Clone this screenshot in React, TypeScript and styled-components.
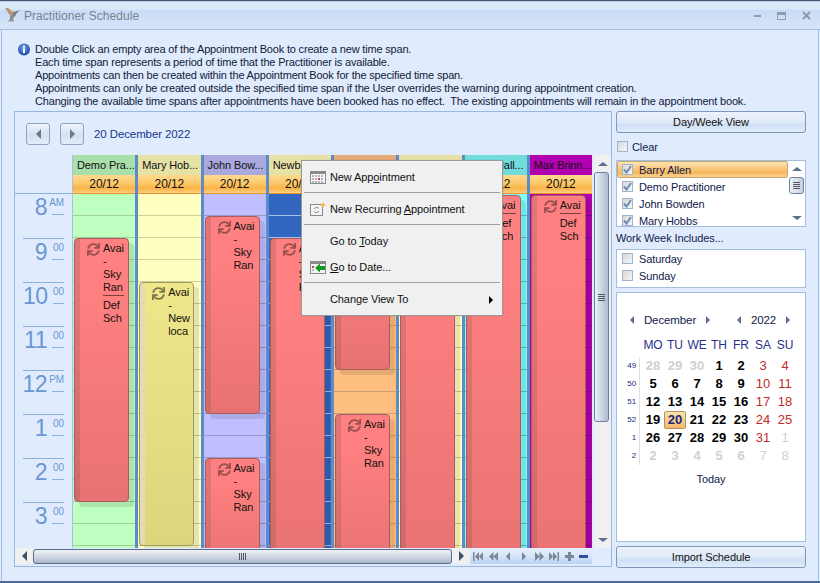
import React from 'react';
import styled, { createGlobalStyle } from 'styled-components';
import { FaSync } from 'react-icons/fa';

const GlobalStyle = createGlobalStyle`
  html, body {
    margin: 0;
    padding: 0;
    background: #e0ecfd;
  }
  body {
    font-family: "Liberation Sans", Arial, sans-serif;
    font-size: 11px;
    letter-spacing: -0.1px;
    color: #111;
  }
  * { box-sizing: border-box; }
`;

type Appt = { top: number; height: number; yellow?: boolean; lines: string[]; note?: string[] };
type Col = { name: string; head: string; body: string; line: string; appts: Appt[] };

const skyRan = ['Avai', '-', 'Sky', 'Ran'];
const defSch = ['Def', 'Sch'];

const columns: Col[] = [
  {
    name: 'Demo Pra...', head: '#a9dfa9', body: '#bfffbf', line: '#a3cf98',
    appts: [{ top: 44, height: 264, lines: skyRan, note: defSch }],
  },
  {
    name: 'Mary Hob...', head: '#e6e2a6', body: '#ffffbf', line: '#cfcf98',
    appts: [{ top: 88, height: 264, yellow: true, lines: ['Avai', '-', 'New', 'loca'] }],
  },
  {
    name: 'John Bow...', head: '#a9a9df', body: '#bfbfff', line: '#9898c8',
    appts: [
      { top: 22, height: 198, lines: skyRan },
      { top: 264, height: 110, lines: skyRan },
    ],
  },
  {
    name: 'Newbie P...', head: '#e6e2a6', body: '#3366c0', line: '#a8c0e8',
    appts: [{ top: 44, height: 330, lines: skyRan }],
  },
  {
    name: 'Sam Ah...', head: '#e5a878', body: '#ffbf80', line: '#cfa070',
    appts: [
      { top: 1, height: 175, lines: [] },
      { top: 220, height: 154, lines: skyRan },
    ],
  },
  {
    name: 'Mary B...', head: '#e6e2a6', body: '#ffffbf', line: '#cfcf98',
    appts: [{ top: 1, height: 374, lines: [] }],
  },
  {
    name: 'Colin Hall...', head: '#70dcdc', body: '#80ffff', line: '#60c0c0',
    appts: [{ top: 1, height: 374, lines: ['Avai'], note: defSch }],
  },
  {
    name: 'Max Brinn...', head: '#b000b0', body: '#b000b0', line: '#8a008a',
    appts: [{ top: 1, height: 374, lines: ['Avai'], note: defSch }],
  },
];

const hours = [
  { h: '8', s: 'AM' },
  { h: '9', s: '00' },
  { h: '10', s: '00' },
  { h: '11', s: '00' },
  { h: '12', s: 'PM' },
  { h: '1', s: '00' },
  { h: '2', s: '00' },
  { h: '3', s: '00' },
];

const weeks: { wk: string; days: [string, 'n' | 'o' | 'w' | 'ow' | 's'][] }[] = [
  { wk: '49', days: [['28', 'o'], ['29', 'o'], ['30', 'o'], ['1', 'n'], ['2', 'n'], ['3', 'w'], ['4', 'w']] },
  { wk: '50', days: [['5', 'n'], ['6', 'n'], ['7', 'n'], ['8', 'n'], ['9', 'n'], ['10', 'w'], ['11', 'w']] },
  { wk: '51', days: [['12', 'n'], ['13', 'n'], ['14', 'n'], ['15', 'n'], ['16', 'n'], ['17', 'w'], ['18', 'w']] },
  { wk: '52', days: [['19', 'n'], ['20', 's'], ['21', 'n'], ['22', 'n'], ['23', 'n'], ['24', 'w'], ['25', 'w']] },
  { wk: '1', days: [['26', 'n'], ['27', 'n'], ['28', 'n'], ['29', 'n'], ['30', 'n'], ['31', 'w'], ['1', 'ow']] },
  { wk: '2', days: [['2', 'o'], ['3', 'o'], ['4', 'o'], ['5', 'o'], ['6', 'o'], ['7', 'ow'], ['8', 'ow']] },
];

const Arrow = ({ dir, color = '#5c6f8c', size = 4 }: { dir: 'l' | 'r' | 'u' | 'd'; color?: string; size?: number }) => (
  <ArrowShape $dir={dir} $color={color} $size={size} />
);

const Check = ({ checked }: { checked?: boolean }) => (
  <CheckBox>
    {checked && (
      <svg width="9" height="9" viewBox="0 0 9 9">
        <path d="M1 4.5 L3.5 7.5 L8 1" fill="none" stroke="#6f8db5" strokeWidth="2" />
      </svg>
    )}
  </CheckBox>
);

const Bird = () => (
  <svg width="17" height="17" viewBox="0 0 17 17">
    <path d="M1 1 L4 1 L9 5 L8 9 L5 7 Z" fill="#b9986a" />
    <path d="M9 5 L13 4 L16 3 L13 6 L11 9 L8 9 Z" fill="#7f7f7f" />
    <path d="M6 8 L11 9 L9 12 L10 15 L7 14 L4 15 L6 12 Z" fill="#8d8d8d" />
  </svg>
);

const InfoIcon = () => (
  <svg width="14" height="14" viewBox="0 0 14 14">
    <defs>
      <radialGradient id="inf" cx="45%" cy="35%" r="70%">
        <stop offset="0" stopColor="#6ea4ee" />
        <stop offset="1" stopColor="#123e98" />
      </radialGradient>
    </defs>
    <circle cx="7" cy="6.6" r="6" fill="url(#inf)" />
    <rect x="6" y="2.6" width="2" height="2" fill="#fff" />
    <rect x="6" y="5.4" width="2" height="4.8" fill="#fff" />
  </svg>
);

const CalendarIcon = () => (
  <svg width="16" height="13" viewBox="0 0 16 13">
    <rect x="0.5" y="0.5" width="15" height="12" fill="#f4f4f4" stroke="#8a8a8a" />
    <rect x="1" y="1" width="14" height="2" fill="#8a8a8a" />
    {[2, 5, 8, 11].map((x) =>
      [4, 7, 10].map((y) => (
        <rect key={`${x}-${y}`} x={x} y={y} width="2" height="2" fill={x === 8 && y === 7 ? '#d04040' : '#b8b8b8'} />
      ))
    )}
  </svg>
);

const RecurIcon = () => (
  <svg width="16" height="14" viewBox="0 0 16 14">
    <rect x="0.5" y="2.5" width="12" height="11" fill="#f4f4f4" stroke="#8a8a8a" />
    <path d="M4 7 A3 3 0 0 1 9 6.5 M9 9 A3 3 0 0 1 4 9.5" fill="none" stroke="#8a8a8a" />
    <path d="M13 0 L14 2 L16 3 L14 4 L13 6 L12 4 L10 3 L12 2 Z" fill="#f6b73c" />
  </svg>
);

const GoDateIcon = () => (
  <svg width="16" height="13" viewBox="0 0 16 13">
    <rect x="0.5" y="0.5" width="15" height="12" fill="#f4f4f4" stroke="#8a8a8a" />
    <rect x="1" y="1" width="14" height="2" fill="#8a8a8a" />
    <rect x="2" y="5" width="2" height="2" fill="#d04040" />
    <rect x="2" y="8" width="2" height="2" fill="#b8b8b8" />
    <path d="M5 7 L10 2.5 L10 5 L15 5 L15 9 L10 9 L10 11.5 Z" fill="#0e9a20" />
  </svg>
);

const NavIcon = ({ d }: { d: string }) => (
  <svg width="11" height="9" viewBox="0 0 11 9">
    <path d={d} fill="#7c8794" />
  </svg>
);

const App = () => (
  <Window>
    <GlobalStyle />
    <TopLine />
    <TitleBar>
      <Bird />
      <TitleText>Practitioner Schedule</TitleText>
      <WinButtons>
        <MinGlyph />
        <MaxGlyph />
        <svg width="9" height="9" viewBox="0 0 9 9">
          <path d="M1 1 L8 8 M8 1 L1 8" stroke="#8f9cad" strokeWidth="2" />
        </svg>
      </WinButtons>
    </TitleBar>
    <Body>
      <InfoRow>
        <InfoIcon />
        <InfoText>
          <div>Double Click an empty area of the Appointment Book to create a new time span.</div>
          <div>Each time span represents a period of time that the Practitioner is available.</div>
          <div>Appointments can then be created within the Appointment Book for the specified time span.</div>
          <div>Appointments can only be created outside the specified time span if the User overrides the warning during appointment creation.</div>
          <div>Changing the available time spans after appointments have been booked has no effect.&nbsp; The existing appointments will remain in the appointment book.</div>
        </InfoText>
      </InfoRow>
      <MainRow>
        <SchedulePanel>
          <NavRow>
            <NavButton><Arrow dir="l" color="#6f7780" size={5} /></NavButton>
            <NavButton><Arrow dir="r" color="#6f7780" size={5} /></NavButton>
            <DateLabel>20 December 2022</DateLabel>
          </NavRow>
          <CalArea>
            <Gutter>
              <GutterHead />
              {hours.map((t) => (
                <HourBlock key={t.h}>
                  <HourNum>{t.h}</HourNum>
                  <HourSmall>{t.s}</HourSmall>
                </HourBlock>
              ))}
            </Gutter>
            <Columns>
              {columns.map((c) => (
                <Column key={c.name}>
                  <ColName $bg={c.head}>{c.name}</ColName>
                  <ColDate>20/12</ColDate>
                  <ColBody $bg={c.body} $line={c.line}>
                    {c.appts.map((a) => (
                      <Appointment key={a.top} $yellow={a.yellow} style={{ top: a.top, height: a.height }}>
                        <ApptIcon $yellow={a.yellow}><FaSync size={13} /></ApptIcon>
                        <ApptText>
                          {a.lines.map((l, i) => <div key={i}>{l}</div>)}
                          {a.note && <ApptRule />}
                          {a.note && a.note.map((l) => <div key={l}>{l}</div>)}
                        </ApptText>
                      </Appointment>
                    ))}
                  </ColBody>
                </Column>
              ))}
            </Columns>
            <VScroll>
              <VArrowBox><Arrow dir="u" /></VArrowBox>
              <VThumb><Grip /></VThumb>
              <ListSpacer />
              <VArrowBox><Arrow dir="d" /></VArrowBox>
            </VScroll>
          </CalArea>
          <HScrollRow>
            <HArrowBox><Arrow dir="l" size={5} color="#3f4f6c" /></HArrowBox>
            <HThumb><HGrip /></HThumb>
            <HArrowBox><Arrow dir="r" size={5} color="#3f4f6c" /></HArrowBox>
            <NavBand>
              <NavIcon d="M0 0 H1.5 V9 H0 Z M2 4.5 L6 0 V9 Z M6 4.5 L10 0 V9 Z" />
              <NavIcon d="M1 4.5 L5.5 0 V9 Z M5.5 4.5 L10 0 V9 Z" />
              <NavIcon d="M3 4.5 L7 0 V9 Z" />
              <NavIcon d="M4 0 L8 4.5 L4 9 Z" />
              <NavIcon d="M1 0 L5.5 4.5 L1 9 Z M5.5 0 L10 4.5 L5.5 9 Z" />
              <NavIcon d="M0 0 L4 4.5 L0 9 Z M4 0 L8 4.5 L4 9 Z M8.5 0 H10 V9 H8.5 Z" />
              <NavIcon d="M4 0 H7 V3 H10 V6 H7 V9 H4 V6 H1 V3 H4 Z" />
              <svg width="9" height="3" viewBox="0 0 9 3"><rect width="9" height="3" fill="#2f4f95" /></svg>
            </NavBand>
          </HScrollRow>
          <ContextMenu>
            <MenuItem>
              <MenuIcon><CalendarIcon /></MenuIcon>
              <span>New App<u>o</u>intment</span>
            </MenuItem>
            <MenuSep />
            <MenuItem>
              <MenuIcon><RecurIcon /></MenuIcon>
              <span>New Recurring <u>A</u>ppointment</span>
            </MenuItem>
            <MenuSep />
            <MenuItem>
              <MenuIcon />
              <span>Go to <u>T</u>oday</span>
            </MenuItem>
            <MenuItem>
              <MenuIcon><GoDateIcon /></MenuIcon>
              <span><u>G</u>o to Date...</span>
            </MenuItem>
            <MenuSep />
            <MenuItem>
              <MenuIcon />
              <span>Change View To</span>
              <SubArrow><Arrow dir="r" color="#000" /></SubArrow>
            </MenuItem>
          </ContextMenu>
        </SchedulePanel>
        <SidePanel>
          <SideButton>Day/Week View</SideButton>
          <ClearRow><Check /><span>Clear</span></ClearRow>
          <PractitionerBox>
            <PractitionerList>
              <ListRow $active><Check checked /><span>Barry Allen</span></ListRow>
              <ListRow><Check checked /><span>Demo Practitioner</span></ListRow>
              <ListRow><Check checked /><span>John Bowden</span></ListRow>
              <ListRow><Check checked /><span>Mary Hobbs</span></ListRow>
            </PractitionerList>
            <ListScroll>
              <Arrow dir="u" />
              <ListThumb><Grip /></ListThumb>
              <ListSpacer />
              <Arrow dir="d" />
            </ListScroll>
          </PractitionerBox>
          <WeekLabel>Work Week Includes...</WeekLabel>
          <WeekBox>
            <ListRow><Check /><span>Saturday</span></ListRow>
            <ListRow><Check /><span>Sunday</span></ListRow>
          </WeekBox>
          <CalendarBox>
            <MonthHeader>
              <MonthGroup $width={80}>
                <Arrow dir="l" />
                <span>December</span>
                <Arrow dir="r" />
              </MonthGroup>
              <MonthGroup $width={53}>
                <Arrow dir="l" />
                <span>2022</span>
                <Arrow dir="r" />
              </MonthGroup>
            </MonthHeader>
            <DayGrid>
              <span />
              {['MO', 'TU', 'WE', 'TH', 'FR', 'SA', 'SU'].map((d) => <WeekDay key={d}>{d}</WeekDay>)}
              {weeks.map((w) => (
                <React.Fragment key={w.wk}>
                  <WeekNum>{w.wk}</WeekNum>
                  {w.days.map(([d, kind], i) => <DayCell key={i} $kind={kind}>{d}</DayCell>)}
                </React.Fragment>
              ))}
            </DayGrid>
            <TodayLabel>Today</TodayLabel>
          </CalendarBox>
          <SideButton>Import Schedule</SideButton>
        </SidePanel>
      </MainRow>
    </Body>
  </Window>
);

export default App;

const Window = styled.div`
  display: flex;
  flex-direction: column;
  width: 820px;
  height: 583px;
  overflow: hidden;
  background: #e0ecfd;
  border-bottom: 2px solid #4a6c96;
`;

const TopLine = styled.div`
  height: 2px;
  background: linear-gradient(#46586f 50%, #b8cce6 50%);
`;

const TitleBar = styled.div`
  display: flex;
  align-items: center;
  height: 28px;
  padding: 0 9px 0 4px;
  gap: 3px;
  background: linear-gradient(#dce9fa 0%, #dce9fa 25%, #c9dcf6 32%, #d6e4f8 100%);
  border-bottom: 1px solid #9fbfe6;
`;

const TitleText = styled.div`
  flex: 1;
  font-size: 12px;
  letter-spacing: 0.05px;
  color: #77838f;
`;

const WinButtons = styled.div`
  display: flex;
  align-items: center;
  gap: 16px;
`;

const MinGlyph = styled.span`
  width: 7px;
  height: 2px;
  background: #8f9cad;
`;

const MaxGlyph = styled.span`
  width: 9px;
  height: 8px;
  border: 1px solid #8f9cad;
  border-top-width: 3px;
`;

const Body = styled.div`
  flex: 1;
  margin: 0 1px;
  padding: 13px 0 0 12px;
  border-left: 1px solid #9fbfe6;
  border-right: 1px solid #9fbfe6;
`;

const InfoRow = styled.div`
  display: flex;
  gap: 4px;
  margin-left: 3px;
  height: 65px;
`;

const InfoText = styled.div`
  line-height: 13px;
  font-size: 11px;
  letter-spacing: -0.18px;
  white-space: nowrap;
  color: #10203a;
`;

const MainRow = styled.div`
  display: flex;
  gap: 4px;
  margin-top: 3px;
`;

const SchedulePanel = styled.div`
  position: relative;
  width: 598px;
  height: 456px;
  border: 1px solid #9ab8dc;
`;

const NavRow = styled.div`
  display: flex;
  align-items: center;
  height: 43px;
  padding: 0 0 0 11px;
  gap: 10px;
`;

const NavButton = styled.div`
  display: flex;
  align-items: center;
  justify-content: center;
  width: 24px;
  height: 22px;
  border: 1px solid #8ea4c2;
  border-radius: 3px;
  background: linear-gradient(#eef4fd, #d3e0f3 55%, #e3ecf9);
`;

const DateLabel = styled.div`
  font-size: 11.5px;
  color: #15348c;
`;

const ArrowShape = styled.span<{ $dir: string; $color: string; $size: number }>`
  display: inline-block;
  width: 0;
  height: 0;
  border-style: solid;
  border-color: transparent;
  border-width: ${({ $size }) => $size}px;
  ${({ $dir, $color, $size }) =>
    $dir === 'l'
      ? `border-right-color: ${$color}; border-left-width: 0;`
      : $dir === 'r'
      ? `border-left-color: ${$color}; border-right-width: 0;`
      : $dir === 'u'
      ? `border-bottom-color: ${$color}; border-top-width: 0; border-left-width: ${$size + 1}px; border-right-width: ${$size + 1}px;`
      : `border-top-color: ${$color}; border-bottom-width: 0; border-left-width: ${$size + 1}px; border-right-width: ${$size + 1}px;`}
`;

const CalArea = styled.div`
  display: flex;
  height: 393px;
`;

const Gutter = styled.div`
  width: 58px;
  border-right: 1px solid #a4c2e8;
  overflow: hidden;
`;

const GutterHead = styled.div`
  height: 39px;
  border-bottom: 1px solid #8eb0dc;
`;

const HourBlock = styled.div`
  display: flex;
  justify-content: flex-end;
  gap: 5px;
  height: 44px;
  margin: 0 8px;
  color: #6c96d2;
  & + & {
    border-top: 1px solid #8eb0dc;
  }
`;

const HourNum = styled.div`
  font-size: 23px;
  letter-spacing: -0.5px;
  line-height: 24px;
  margin-top: 1px;
`;

const HourSmall = styled.div`
  width: 12px;
  height: 21px;
  padding-top: 3px;
  font-size: 10px;
  line-height: 12px;
  text-align: right;
  white-space: nowrap;
  direction: rtl;
  border-bottom: 1px solid #8eb0dc;
`;

const Columns = styled.div`
  display: grid;
  grid-template-columns: repeat(8, 1fr);
  gap: 0 3px;
  width: 519px;
  background: #5b8bc8;
`;

const Column = styled.div`
  display: flex;
  flex-direction: column;
  min-width: 0;
`;

const ColName = styled.div<{ $bg: string }>`
  height: 20px;
  padding: 0 0 0 4px;
  line-height: 20px;
  white-space: nowrap;
  overflow: hidden;
  background: ${({ $bg }) => $bg};
`;

const ColDate = styled.div`
  height: 19px;
  line-height: 18px;
  text-align: center;
  font-size: 12px;
  background: linear-gradient(#fdd98e, #fccb6e 40%, #f9b347 75%, #fcd080);
  border-bottom: 1px solid #e8962a;
`;

const ColBody = styled.div<{ $bg: string; $line: string }>`
  position: relative;
  flex: 1;
  background-color: ${({ $bg }) => $bg};
  background-image: repeating-linear-gradient(
    transparent 0,
    transparent 21px,
    ${({ $line }) => $line} 21px,
    ${({ $line }) => $line} 22px
  );
  overflow: hidden;
`;

const Appointment = styled.div<{ $yellow?: boolean }>`
  position: absolute;
  left: 1px;
  width: 55px;
  display: flex;
  padding: 3px 0 0 12px;
  gap: 3px;
  line-height: 13px;
  color: #111;
  border: 1px solid ${({ $yellow }) => ($yellow ? '#a09a5c' : '#a85c5c')};
  border-radius: 4px;
  box-shadow: 5px 5px 0 rgba(0, 0, 0, 0.1);
  background: ${({ $yellow }) =>
    $yellow
      ? 'linear-gradient(to right, #e2dcb0 5px, transparent 5px), linear-gradient(#efe78a, #dcd57c)'
      : 'linear-gradient(to right, rgba(120, 80, 80, 0.22) 5px, transparent 5px), linear-gradient(#ff8080 20%, #e87272)'};
`;

const ApptIcon = styled.div<{ $yellow?: boolean }>`
  width: 13px;
  padding-top: 1px;
  color: ${({ $yellow }) => ($yellow ? '#7c784c' : '#9a4f4f')};
`;

const ApptText = styled.div`
  width: 21px;
  white-space: nowrap;
`;

const ApptRule = styled.div`
  height: 1px;
  margin: 1px 0 3px;
  background: #7a4040;
`;

const VScroll = styled.div`
  display: flex;
  flex-direction: column;
  align-items: center;
  width: 17px;
  margin-left: 2px;
  background: #f0f0f0;
`;

const VArrowBox = styled.div`
  display: flex;
  align-items: center;
  justify-content: center;
  height: 17px;
  width: 100%;
`;

const VThumb = styled.div`
  display: flex;
  align-items: center;
  justify-content: center;
  width: 15px;
  height: 250px;
  margin-right: 2px;
  border: 1px solid #6d7f9c;
  border-radius: 3px;
  background: linear-gradient(to right, #eef2f8, #c4d0e0 60%, #aebccf);
`;

const Grip = styled.div`
  width: 7px;
  height: 7px;
  background: repeating-linear-gradient(#556 0, #556 1px, transparent 1px, transparent 2px);
`;

const HScrollRow = styled.div`
  display: flex;
  align-items: flex-start;
  height: 18px;
`;

const HArrowBox = styled.div`
  display: flex;
  align-items: center;
  justify-content: center;
  width: 18px;
  height: 16px;
  background: #f0f0f0;
`;

const HThumb = styled.div`
  display: flex;
  align-items: center;
  justify-content: center;
  width: 419px;
  height: 15px;
  margin-top: 1px;
  border: 1px solid #5a6c8c;
  border-radius: 3px;
  background: linear-gradient(#eef1f6, #d5dce6 45%, #a9b8cb);
`;

const HGrip = styled.div`
  width: 7px;
  height: 7px;
  background: repeating-linear-gradient(to right, #556 0, #556 1px, transparent 1px, transparent 2px);
`;

const NavBand = styled.div`
  display: flex;
  align-items: center;
  justify-content: space-between;
  width: 122px;
  height: 16px;
  padding: 0 4px 0 3px;
  background: linear-gradient(#e6effc, #d6e5fa 50%, #b9d3f6);
`;

const ContextMenu = styled.div`
  position: absolute;
  top: 48px;
  left: 286px;
  width: 202px;
  padding: 3px 2px;
  background: #f0f0f0;
  border: 1px solid #9a9a9a;
  box-shadow: 0 0 1px rgba(0, 0, 0, 0.2);
  z-index: 5;
`;

const MenuItem = styled.div`
  position: relative;
  display: flex;
  align-items: center;
  height: 26px;
  color: #111;
`;

const MenuIcon = styled.div`
  display: flex;
  align-items: center;
  justify-content: center;
  width: 26px;
  padding-left: 1px;
`;

const MenuSep = styled.div`
  height: 1px;
  margin: 2px 0 3px;
  background: #a0a0a0;
`;

const SubArrow = styled.span`
  position: absolute;
  right: 7px;
  top: 8px;
`;

const SidePanel = styled.div`
  display: flex;
  flex-direction: column;
  width: 190px;
`;

const SideButton = styled.div`
  height: 22px;
  line-height: 21px;
  text-align: center;
  border: 1px solid #7f97ba;
  border-radius: 3px;
  background: linear-gradient(#edf3fc, #dfe9f8 50%, #cfdff4 65%, #e2ecfa);
`;

const ClearRow = styled.div`
  display: flex;
  align-items: center;
  height: 27px;
  padding-left: 1px;
  gap: 4px;
  color: #10204a;
`;

const CheckBox = styled.span`
  display: inline-flex;
  align-items: center;
  justify-content: center;
  width: 11px;
  height: 11px;
  flex: none;
  border: 1px solid #9fb4d0;
  background: linear-gradient(135deg, #d8d8d8, #f6f6f6);
`;

const PractitionerBox = styled.div`
  display: flex;
  height: 67px;
  background: #fff;
  border: 1px solid #a4bedd;
  overflow: hidden;
`;

const PractitionerList = styled.div`
  flex: 1;
  min-width: 0;
`;

const ListRow = styled.div<{ $active?: boolean }>`
  display: flex;
  align-items: center;
  gap: 6px;
  height: 17px;
  padding-left: 5px;
  color: #10204a;
  white-space: nowrap;
  ${({ $active }) =>
    $active &&
    `
    border: 1px solid #c8a870;
    border-radius: 2px;
    padding-left: 4px;
    background: linear-gradient(#fde4b4, #f9b75c 70%, #fbd394);
  `}
`;

const ListScroll = styled.div`
  display: flex;
  flex-direction: column;
  align-items: center;
  width: 17px;
  padding: 6px 0;
`;

const ListThumb = styled.div`
  display: flex;
  align-items: center;
  justify-content: center;
  width: 15px;
  height: 17px;
  margin-top: 6px;
  border: 1px solid #6d7f9c;
  border-radius: 3px;
  background: linear-gradient(to right, #eef2f8, #c4d0e0);
`;

const ListSpacer = styled.div`
  flex: 1;
`;

const WeekLabel = styled.div`
  height: 22px;
  line-height: 22px;
  color: #10204a;
`;

const WeekBox = styled.div`
  height: 39px;
  background: #fff;
  border: 1px solid #a4bedd;
`;

const CalendarBox = styled.div`
  height: 250px;
  margin: 4px 0;
  padding-top: 20px;
  background: #fff;
  border: 1px solid #a4bedd;
`;

const MonthHeader = styled.div`
  display: flex;
  height: 14px;
  padding-left: 13px;
  gap: 27px;
`;

const MonthGroup = styled.div<{ $width: number }>`
  display: flex;
  align-items: center;
  justify-content: space-between;
  width: ${({ $width }) => $width}px;
  font-size: 11.5px;
  color: #10204a;
`;

const DayGrid = styled.div`
  display: grid;
  grid-template-columns: 25px repeat(7, 22px);
  grid-template-rows: 24px;
  grid-auto-rows: 18px;
  margin-top: 6px;
`;

const WeekDay = styled.div`
  text-align: center;
  font-size: 12px;
  line-height: 24px;
  color: #2b2f8c;
`;

const WeekNum = styled.div`
  width: 23px;
  padding-right: 3px;
  text-align: right;
  font-size: 8px;
  line-height: 18px;
  color: #1a2a80;
  border-right: 1px solid #e0e0e0;
`;

const DayCell = styled.div<{ $kind: string }>`
  text-align: center;
  line-height: 18px;
  font-size: 13px;
  font-weight: ${({ $kind }) => ($kind === 'w' || $kind === 'ow' ? 400 : 700)};
  color: ${({ $kind }) =>
    $kind === 'w' ? '#c42a2a' : $kind === 'o' || $kind === 'ow' ? '#d0d0d0' : $kind === 's' ? '#1a2a80' : '#000'};
  ${({ $kind }) =>
    $kind === 's' &&
    `
    border: 1px solid #b49260;
    border-radius: 2px;
    line-height: 16px;
    background: linear-gradient(#fde2ae, #f9b968);
  `}
`;

const TodayLabel = styled.div`
  margin-top: 8px;
  text-align: center;
  color: #10204a;
`;
